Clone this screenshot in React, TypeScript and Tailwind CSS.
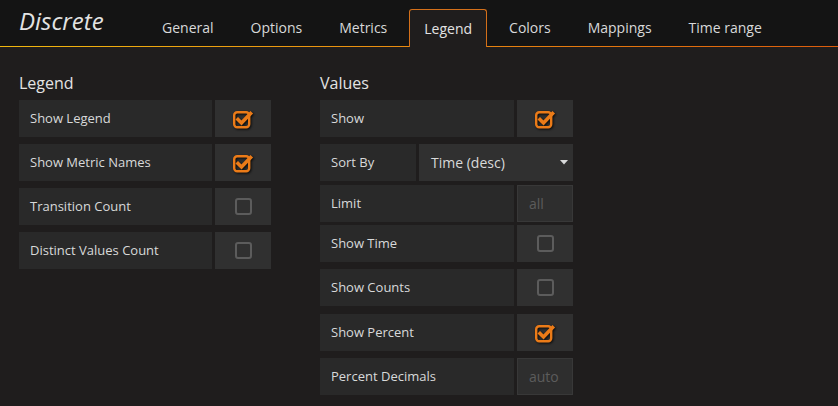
import React from 'react';

const tabs = ['General', 'Options', 'Metrics', 'Legend', 'Colors', 'Mappings', 'Time range'];

const CheckOn = () => (
  <svg width="22" height="22" viewBox="0 0 22 22" className="drop-shadow-[1px_1px_1px_rgba(0,0,0,0.8)]">
    <rect x="2.2" y="4.2" width="15" height="15" rx="3" fill="none" stroke="#eb7b18" strokeWidth="2.4" />
    <path d="M6 11.5 L9.5 15 L18.5 5.5" fill="none" stroke="#eb7b18" strokeWidth="3.6" strokeLinecap="square" />
  </svg>
);

const CheckOff = () => <div className="h-[17px] w-[17px] rounded-[3px] border-2 border-[#5c5c5c]" />;

const Label = ({ text, w }: { text: string; w: string }) => (
  <div className={`${w} flex h-full items-center bg-[#292929] pl-[11px] text-[13px] text-[#d8d9da]`}>{text}</div>
);

const CheckRow = ({ text, on, w, mt }: { text: string; on: boolean; w: string; mt: string }) => (
  <div className={`flex h-[37px] gap-[3px] ${mt}`}>
    <Label text={text} w={w} />
    <div className="flex w-[56px] items-center justify-center bg-[#303030]">{on ? <CheckOn /> : <CheckOff />}</div>
  </div>
);

const InputRow = ({ text, placeholder, mt }: { text: string; placeholder: string; mt: string }) => (
  <div className={`flex h-[37px] gap-[3px] ${mt}`}>
    <Label text={text} w="w-[194px]" />
    <div className="flex w-[56px] items-center border border-[#383838] bg-[#2e2e2e] pl-[11px] text-[14px] text-[#5c5c5c]">{placeholder}</div>
  </div>
);

export default function App() {
  return (
    <div className="h-[406px] w-[838px] overflow-hidden bg-[#1f1d1d] font-['Open_Sans',sans-serif]">
      <div className="bg-gradient-to-r from-[#f0b70e] via-[#e88a10] to-[#dc5c0c] pb-px">
        <div className="flex h-[46px] items-end bg-[#141414] pl-[19px]">
          <div className="w-[128px] self-start pt-[3px] text-[24px] italic text-[#e3e3e3]">Discrete</div>
          <div className="flex gap-[7px]">
            {tabs.map((t) =>
              t === 'Legend' ? (
                <div key={t} className="relative -mb-px h-[38px] rounded-t-[3px] border border-b-0 border-[#d4701a] bg-[#1f1d1d] px-[14px] text-[14px] leading-[37px] text-[#e3e3e3]">
                  {t}
                </div>
              ) : (
                <div key={t} className="h-[37px] px-[15px] text-[14px] leading-[37px] text-[#d8d9da]">
                  {t}
                </div>
              )
            )}
          </div>
        </div>
      </div>
      <div className="flex gap-[49px] pl-[19px] pt-[26px]">
        <div className="w-[252px]">
          <div className="mb-[7px] text-[16px] leading-[20px] text-[#e3e3e3]">Legend</div>
          <CheckRow text="Show Legend" on w="w-[193px]" mt="" />
          <CheckRow text="Show Metric Names" on w="w-[193px]" mt="mt-[7px]" />
          <CheckRow text="Transition Count" on={false} w="w-[193px]" mt="mt-[7px]" />
          <CheckRow text="Distinct Values Count" on={false} w="w-[193px]" mt="mt-[7px]" />
        </div>
        <div className="w-[253px]">
          <div className="mb-[7px] text-[16px] leading-[20px] text-[#e3e3e3]">Values</div>
          <CheckRow text="Show" on w="w-[194px]" mt="" />
          <div className="mt-[7px] flex h-[37px] gap-[3px]">
            <Label text="Sort By" w="w-[96px]" />
            <div className="flex w-[154px] items-center justify-between bg-[#303030] pl-[12px] pr-[5px] text-[14px] text-[#d8d9da]">
              <span>Time (desc)</span>
              <svg width="8" height="5" viewBox="0 0 8 5">
                <path d="M0 0 L8 0 L4 4.5 Z" fill="#d8d9da" />
              </svg>
            </div>
          </div>
          <InputRow text="Limit" placeholder="all" mt="mt-[4px]" />
          <CheckRow text="Show Time" on={false} w="w-[194px]" mt="mt-[3px]" />
          <CheckRow text="Show Counts" on={false} w="w-[194px]" mt="mt-[7px]" />
          <CheckRow text="Show Percent" on w="w-[194px]" mt="mt-[8px]" />
          <InputRow text="Percent Decimals" placeholder="auto" mt="mt-[7px]" />
        </div>
      </div>
    </div>
  );
}
